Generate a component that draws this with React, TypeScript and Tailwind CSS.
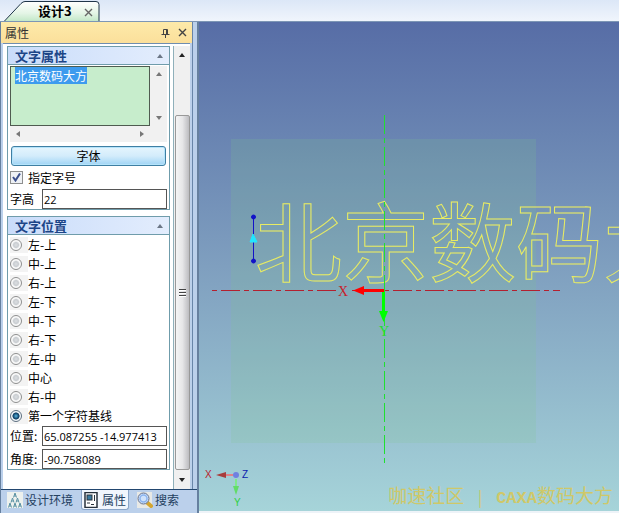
import React, { useEffect, useRef, useState } from "react";

const ANCHORS = ["左-上", "中-上", "右-上", "左-下", "中-下", "右-下", "左-中", "中心", "右-中", "第一个字符基线"];

type Direction = "up" | "down" | "left" | "right";

const ARROW_POINTS: Record<Direction, string> = {
    up: "1,6 4,2 7,6",
    down: "1,2 4,6 7,2",
    left: "6,1 2,4 6,7",
    right: "2,1 6,4 2,7",
};

function Arrow({ direction, className = "fill-[#777]" }: { direction: Direction; className?: string }) {
    return (
        <svg width="8" height="8" viewBox="0 0 8 8" className={className}>
            <polygon points={ARROW_POINTS[direction]} />
        </svg>
    );
}

function CloseIcon({ className }: { className?: string }) {
    return (
        <svg width="9" height="9" viewBox="0 0 9 9" className={className} fill="none" stroke="currentColor" strokeWidth="1.4">
            <path d="M1 1l7 7M8 1L1 8" />
        </svg>
    );
}

function Section({ title, children }: { title: string; children: React.ReactNode }) {
    return (
        <section className="border border-[#6f9cab] bg-white">
            <h2 className="flex h-[18px] items-center justify-between border-b border-[#6f9cab] bg-linear-to-r from-[#c9dcfa] to-[#e3edfd] pr-[3px] pl-[7px] text-[13px] leading-4 font-bold text-[#1c4587]">
                {title}
                <button type="button" aria-label={`折叠 ${title}`} className="flex h-4 w-3 items-center justify-center">
                    <Arrow direction="up" className="fill-[#6b7686]" />
                </button>
            </h2>
            {children}
        </section>
    );
}

function Field({ id, label, defaultValue }: { id: string; label: string; defaultValue: string }) {
    return (
        <div className="flex h-5 items-center">
            <label htmlFor={id} className="w-8 shrink-0 whitespace-nowrap">
                {label}
            </label>
            <input
                id={id}
                type="text"
                defaultValue={defaultValue}
                className="h-5 min-w-0 flex-1 border border-[#555] bg-white px-px font-['Open_Sans','Noto_Sans_CJK_SC',sans-serif] text-[11px] outline-none"
            />
        </div>
    );
}

function PropertyPanel() {
    const [anchor, setAnchor] = useState("第一个字符基线");
    const textRef = useRef<HTMLTextAreaElement>(null);

    useEffect(() => {
        textRef.current?.focus();
        textRef.current?.select();
    }, []);

    return (
        <div className="flex min-h-0 min-w-0 flex-1 gap-[3px] border-t border-[#6f8db0] bg-white pt-0.5 pl-1">
            <div className="flex min-w-0 flex-1 flex-col gap-1.5">
                <Section title="文字属性">
                    <div className="grid grid-cols-[140px_1fr] grid-rows-[60px_16px] pt-px pl-0.5">
                        <textarea
                            ref={textRef}
                            aria-label="文字"
                            defaultValue="北京数码大方"
                            className="resize-none overflow-hidden border border-[#4f5b50] bg-[#c7edcc] px-1 py-px text-xs leading-4 outline-none selection:bg-[#3d9bee] selection:text-white"
                        />
                        <div className="mr-0.5 flex flex-col items-center justify-between bg-[#f1f1f1] py-1">
                            <Arrow direction="up" />
                            <Arrow direction="down" />
                        </div>
                        <div className="flex items-center justify-between bg-[#f1f1f1] px-1">
                            <Arrow direction="left" />
                            <Arrow direction="right" />
                        </div>
                        <div className="mr-0.5 bg-[#f1f1f1]" />
                    </div>
                    <div className="px-0.5 pt-1">
                        <button
                            type="button"
                            className="mx-px flex h-5 w-[calc(100%-2px)] items-center justify-center rounded-[3px] border border-[#3f7fa3] bg-linear-to-b from-[#e5f5fd] via-[#d3ecfb] to-[#9fd4f5] inset-ring inset-ring-[#b5e4fb]"
                        >
                            字体
                        </button>
                        <label className="flex h-[23px] items-center">
                            <input type="checkbox" defaultChecked className="peer sr-only" />
                            <span className="flex size-[13px] items-center justify-center border border-[#8e8f8f] bg-[#eef1f5] peer-checked:[&>svg]:visible">
                                <svg width="9" height="9" viewBox="0 0 9 9" fill="none" stroke="#3b4f8c" strokeWidth="2" className="invisible">
                                    <path d="M1 4l2.5 3.5L8 .5" />
                                </svg>
                            </span>
                            <span className="ml-[5px]">指定字号</span>
                        </label>
                        <Field id="text-height" label="字高" defaultValue="22" />
                    </div>
                </Section>

                <Section title="文字位置">
                    <div className="px-0.5">
                        <fieldset>
                            {ANCHORS.map((name) => (
                                <label key={name} className="flex h-[19px] items-center">
                                    <span className="flex h-4 w-[18px] shrink-0 items-center bg-[#f3f3f3]">
                                        <input
                                            type="radio"
                                            name="anchor"
                                            checked={anchor === name}
                                            onChange={() => setAnchor(name)}
                                            className="size-3 appearance-none rounded-full border border-[#8e8f8f] bg-[radial-gradient(circle,#dcdfe2_0%,#c9cdd1_35%,#fafafa_55%)] checked:border-[#5d6f80] checked:bg-[radial-gradient(circle,#5cb8e0_0%,#174f78_35%,#123d5f_45%,#f4f8fb_55%)]"
                                        />
                                    </span>
                                    {name}
                                </label>
                            ))}
                        </fieldset>
                        <div className="flex flex-col gap-[3px] pt-px">
                            <Field id="position" label="位置:" defaultValue="65.087255 -14.977413" />
                            <Field id="angle" label="角度:" defaultValue="-90.758089" />
                        </div>
                    </div>
                </Section>
            </div>

            {/* Scroll bar */}
            <div className="flex w-[17px] shrink-0 flex-col items-center border-l border-[#8fb0ba] bg-[#f0f0f0]">
                <div className="flex h-[18px] items-center">
                    <Arrow direction="up" className="fill-[#222]" />
                </div>
                <div className="h-[51px]" />
                <div className="flex w-[15px] flex-1 flex-col items-center justify-center gap-px rounded-[2px] border border-[#999] bg-linear-to-r from-[#f5f5f5] via-[#e6e6e8] to-[#bcbcc0]">
                    <div className="h-0.5 w-[7px] border-t border-[#444] bg-white" />
                    <div className="h-0.5 w-[7px] border-t border-[#444] bg-white" />
                    <div className="h-0.5 w-[7px] border-t border-[#444] bg-white" />
                </div>
                <div className="flex h-[19px] items-center">
                    <Arrow direction="down" className="fill-[#222]" />
                </div>
            </div>
        </div>
    );
}

function TreeIcon() {
    return (
        <svg width="16" height="16" viewBox="0 0 16 16" fill="none" stroke="#5c93a5" strokeWidth="1">
            <rect width="16" height="16" fill="#edf1ee" stroke="none" />
            <path d="M6.5 5.5L8 1l1.500 4.500M7 4h2M4 10.500L5.500 6 7 10.500M4.500 9h2M9 10.500L10.500 6 12 10.500M9.500 9h2M1.500 15.500L3 11l1.500 4.500M2 14h2M6.500 15.500L8 11l1.500 4.500M7 14h2M11.500 15.500L13 11l1.500 4.500M12 14h2" />
        </svg>
    );
}

function PropertyIcon() {
    return (
        <svg width="15" height="16" viewBox="0 0 15 16" fill="none" stroke="#28323c">
            <rect x="1" y=".5" width="12" height="15" fill="#fff" strokeWidth="1.500" />
            <rect x="3" y="3" width="5" height="5" fill="#39799d" />
            <path d="M10.500 3v6M3 11h3M7 12.500h3" />
        </svg>
    );
}

function SearchIcon() {
    return (
        <svg width="16" height="16" viewBox="0 0 16 16" fill="none">
            <rect width="15" height="16" fill="#e8e9e6" />
            <path d="M10 10.500l4 3.500" stroke="#d3a531" strokeWidth="4" strokeLinecap="round" />
            <circle cx="6.500" cy="6.500" r="5.500" fill="#cfe2fb" stroke="#66718c" />
            <circle cx="6.500" cy="6.500" r="3.500" stroke="#8db5ef" strokeWidth="1.500" />
        </svg>
    );
}

function DockTabs() {
    return (
        <nav className="flex h-6 shrink-0 items-start border-t border-[#22466f] bg-[#bbd0eb] pl-1.5 whitespace-nowrap text-[#24405f]">
            <button type="button" className="flex h-5 items-center gap-0.5">
                <TreeIcon />
                设计环境
            </button>
            <button type="button" className="ml-2 flex h-5 items-center gap-[3px] rounded-b-[3px] border border-t-0 border-[#8aa5c8] bg-[#f1f6fd] px-0.5">
                <PropertyIcon />
                属性
            </button>
            <button type="button" className="ml-2 flex h-5 items-center gap-0.5">
                <SearchIcon />
                搜索
            </button>
        </nav>
    );
}

function Viewport() {
    return (
        <main className="relative min-w-0 flex-1 overflow-hidden border-b-2 border-[#eef3f8] bg-linear-to-b from-[#576da6] via-[#7f9fbf] to-[#a6d4d9]">
            <svg className="absolute inset-0 size-full">
                {/* Sketch plane */}
                <rect x="32" y="117" width="305" height="304" fill="#7fc58c" fillOpacity="0.18" />

                <text
                    x="56"
                    y="254"
                    fill="none"
                    stroke="#e9ec62"
                    strokeWidth="1"
                    className="font-['Noto_Sans_CJK_SC',sans-serif] text-[87px]"
                >
                    北京数码大方
                </text>

                <g stroke="#1212c8" fill="#1212c8">
                    <path d="M54.500 195v44" />
                    <circle cx="54.500" cy="195" r="2" />
                    <circle cx="54.500" cy="239" r="2" />
                    <path d="M54 212l-3 8h7z" fill="#22e6ff" stroke="#22e6ff" />
                </g>

                {/* Axes */}
                <path d="M13 268.500h124M153 268.500h208" stroke="#b3202f" strokeDasharray="5 4 19 4" />
                <path d="M185.500 93v348" stroke="#1fe02f" strokeDasharray="19 4 5 4" />
                <path d="M164 268.500h21" stroke="#f00" strokeWidth="3" />
                <path d="M154 268.500l11-4.500v9z" fill="#f00" />
                <path d="M184.500 270v20" stroke="#0f0" strokeWidth="3" />
                <path d="M184.500 300l-4.500-11h9z" fill="#0f0" />
                <text x="139" y="274" fill="#c8202c" className="font-['Liberation_Serif',serif] text-[14px]">
                    X
                </text>
                <text x="180" y="314" fill="#1fe02f" className="font-['Liberation_Serif',serif] text-[14px]">
                    Y
                </text>
            </svg>

            {/* Orientation triad */}
            <svg width="56" height="48" className="absolute bottom-0 left-1 font-['Liberation_Sans',sans-serif] text-[10px]">
                <path d="M21 12h9" stroke="#e08088" strokeWidth="2" />
                <path d="M13 12l10-3v6z" fill="#a83c3c" />
                <path d="M33 16v8" stroke="#7ee88a" strokeWidth="2" />
                <path d="M33 32l-3-9h6z" fill="#62dc68" />
                <circle cx="33" cy="12" r="3" fill="#6f80e0" />
                <text x="2" y="15" fill="#b81c2c">X</text>
                <text x="39" y="15" fill="#0c1cae">Z</text>
                <text x="31" y="43" fill="#2cd040">Y</text>
            </svg>

            <p className="absolute right-1.5 bottom-0 flex items-baseline text-[19px] leading-6 whitespace-nowrap text-[#cfc868]">
                咖速社区
                <span className="w-8 text-center text-base">|</span>
                <span className="font-['Liberation_Mono',monospace] text-[17px] font-bold">CAXA</span>
                数码大方
            </p>
        </main>
    );
}

export default function App() {
    return (
        <div className="flex h-screen min-h-[513px] flex-col overflow-hidden bg-[#bbd0eb] font-['Noto_Sans_CJK_SC',sans-serif] text-xs leading-4 text-black">
            <header className="flex h-[22px] shrink-0 border-b border-[#7d96b5] bg-linear-to-b from-[#dce7f7] to-[#f0f5fc] pl-1">
                <div className="relative flex h-[21px] w-24 items-center">
                    <svg width="96" height="21" className="absolute inset-0">
                        <defs>
                            <linearGradient id="tab-fill" x1="0" y1="0" x2="0" y2="1">
                                <stop offset="0" stopColor="#fff" />
                                <stop offset="0.6" stopColor="#e4f5e6" />
                                <stop offset="1" stopColor="#c3e8c8" />
                            </linearGradient>
                        </defs>
                        <path d="M.5 21L17 3.500q2-2 4-2h71q3 0 3 3V21" fill="url(#tab-fill)" stroke="#1f3549" />
                    </svg>
                    <span className="relative ml-[34px] text-[13px] font-bold">设计3</span>
                    <button type="button" aria-label="关闭文档" className="relative mt-1 mr-[7px] ml-auto text-[#666]">
                        <CloseIcon />
                    </button>
                </div>
            </header>

            <div className="flex min-h-0 flex-1">
                <aside className="flex w-[199px] shrink-0 flex-col border-r-2 border-l border-[#66809f]">
                    <div className="mr-1 flex min-h-0 flex-1 flex-col border-r border-[#6885a8]">
                        <div className="flex h-[21px] shrink-0 items-center bg-linear-to-b from-[#fdeaa9] to-[#fbdf9b] pr-[5px] pl-1 text-[#333]">
                            属性
                            <button type="button" aria-label="固定" className="mr-2 ml-auto text-[#444]">
                                <svg width="9" height="10" viewBox="0 0 9 10" fill="none" stroke="currentColor">
                                    <path d="M2.500 6V1.500h4V6M5.500 1.500V6M.5 6.500h8M4.500 6.500V10" />
                                </svg>
                            </button>
                            <button type="button" aria-label="关闭" className="text-[#444]">
                                <CloseIcon />
                            </button>
                        </div>
                        <div className="flex min-h-0 flex-1 border-x-2 border-[#bbd0eb]">
                            <PropertyPanel />
                        </div>
                    </div>
                    <DockTabs />
                </aside>
                <Viewport />
            </div>
        </div>
    );
}
